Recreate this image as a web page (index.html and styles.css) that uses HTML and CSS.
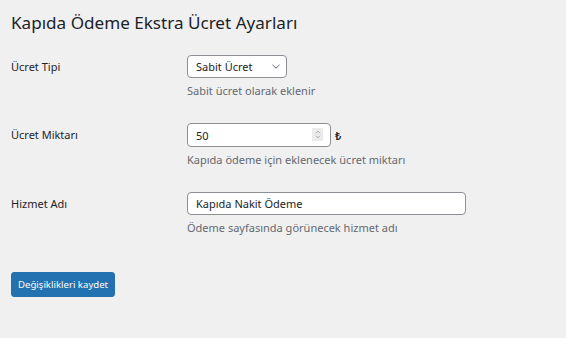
FILE: index.html
```html
<!DOCTYPE html>
<html lang="tr">
<head>
    <meta charset="UTF-8">
    <meta name="viewport" content="width=device-width, initial-scale=1.0">
    <title>Kapıda Ödeme Ekstra Ücret Ayarları</title>
    <link rel="stylesheet" href="styles.css">
</head>
<body>

<div class="wrap">
    <h1>Kapıda Ödeme Ekstra Ücret Ayarları</h1>
    <form class="settings-form">
        <div class="form-row">
            <label class="row-label" for="feeType">Ücret Tipi</label>
            <div class="row-field">
                <div class="select-box">
                    <select id="feeType" name="feeType">
                        <option>Sabit Ücret</option>
                        <option>Yüzde</option>
                    </select>
                    <svg class="select-arrow" width="8" height="5" viewBox="0 0 8 5"><path d="M0.5 0.8l3.5 3.4 3.5-3.4" fill="none" stroke="#646970" stroke-width="1"/></svg>
                </div>
                <p class="description">Sabit ücret olarak eklenir</p>
            </div>
        </div>

        <div class="form-row">
            <label class="row-label" for="feeAmount">Ücret Miktarı</label>
            <div class="row-field">
                <div class="amount-line">
                    <div class="number-box">
                        <input type="text" id="feeAmount" name="feeAmount" value="50">
                        <span class="spinner">
                            <svg width="6" height="9" viewBox="0 0 6 9"><path d="M1 3.2l2-2 2 2M1 5.8l2 2 2-2" fill="none" stroke="#9a9ca0" stroke-width="0.9"/></svg>
                        </span>
                    </div>
                    <span class="currency">₺</span>
                </div>
                <p class="description">Kapıda ödeme için eklenecek ücret miktarı</p>
            </div>
        </div>

        <div class="form-row">
            <label class="row-label" for="serviceName">Hizmet Adı</label>
            <div class="row-field">
                <input type="text" class="regular-text" id="serviceName" name="serviceName" value="Kapıda Nakit Ödeme">
                <p class="description">Ödeme sayfasında görünecek hizmet adı</p>
            </div>
        </div>

        <button type="submit" class="button-primary">Değişiklikleri kaydet</button>
    </form>
</div>

</body>
</html>
```

FILE: styles.css
```css
/* Seite */
body {
    margin: 0;
    background: #f0f0f1;
    color: #1d2327;
    font-family: "Noto Sans", "Open Sans", sans-serif;
    font-size: 11px;
}

.wrap {
    padding: 0 11px;
}

h1 {
    font-size: 17.1px;
    font-weight: 400;
    line-height: 29px;
    margin: 8px 0 6px;
}

/* Formularzeilen */
.form-row {
    display: grid;
    grid-template-columns: 176px 1fr;
    padding: 12px 0;
}

.row-label {
    line-height: 23px;
}

.description {
    margin: 5px 0 0;
    line-height: 16px;
    color: #646970;
}

/* Auswahlfeld */
.select-box {
    position: relative;
    width: 100px;
}

.select-box select {
    appearance: none;
    display: block;
    width: 100px;
    height: 23px;
    padding: 0 8px;
    border: 1px solid #8c8f94;
    border-radius: 4px;
    background: #fff;
    color: #1d2327;
    font: inherit;
    box-sizing: border-box;
}

.select-arrow {
    position: absolute;
    right: 7px;
    top: 9px;
}

/* Zahlenfeld */
.amount-line {
    display: flex;
    align-items: center;
    gap: 4px;
}

.number-box {
    position: relative;
}

input[type="text"] {
    display: block;
    height: 23px;
    padding: 0 8px;
    border: 1px solid #8c8f94;
    border-radius: 4px;
    background: #fff;
    color: #1d2327;
    font: inherit;
    box-sizing: border-box;
}

.number-box input {
    width: 144px;
    height: 24px;
}

.spinner {
    position: absolute;
    right: 8px;
    top: 5px;
    width: 11px;
    height: 13px;
    background: #ebebeb;
    display: flex;
    align-items: center;
    justify-content: center;
}

.currency {
    font-size: 11px;
    font-weight: 600;
}

.regular-text {
    width: 279px;
}

/* Speichern-Button */
.button-primary {
    margin-top: 24px;
    height: 25px;
    padding: 0 6px;
    border: 1px solid #2271b1;
    border-radius: 3px;
    background: #2271b1;
    color: #fff;
    font: inherit;
    font-size: 9.6px;
    cursor: pointer;
}
```
